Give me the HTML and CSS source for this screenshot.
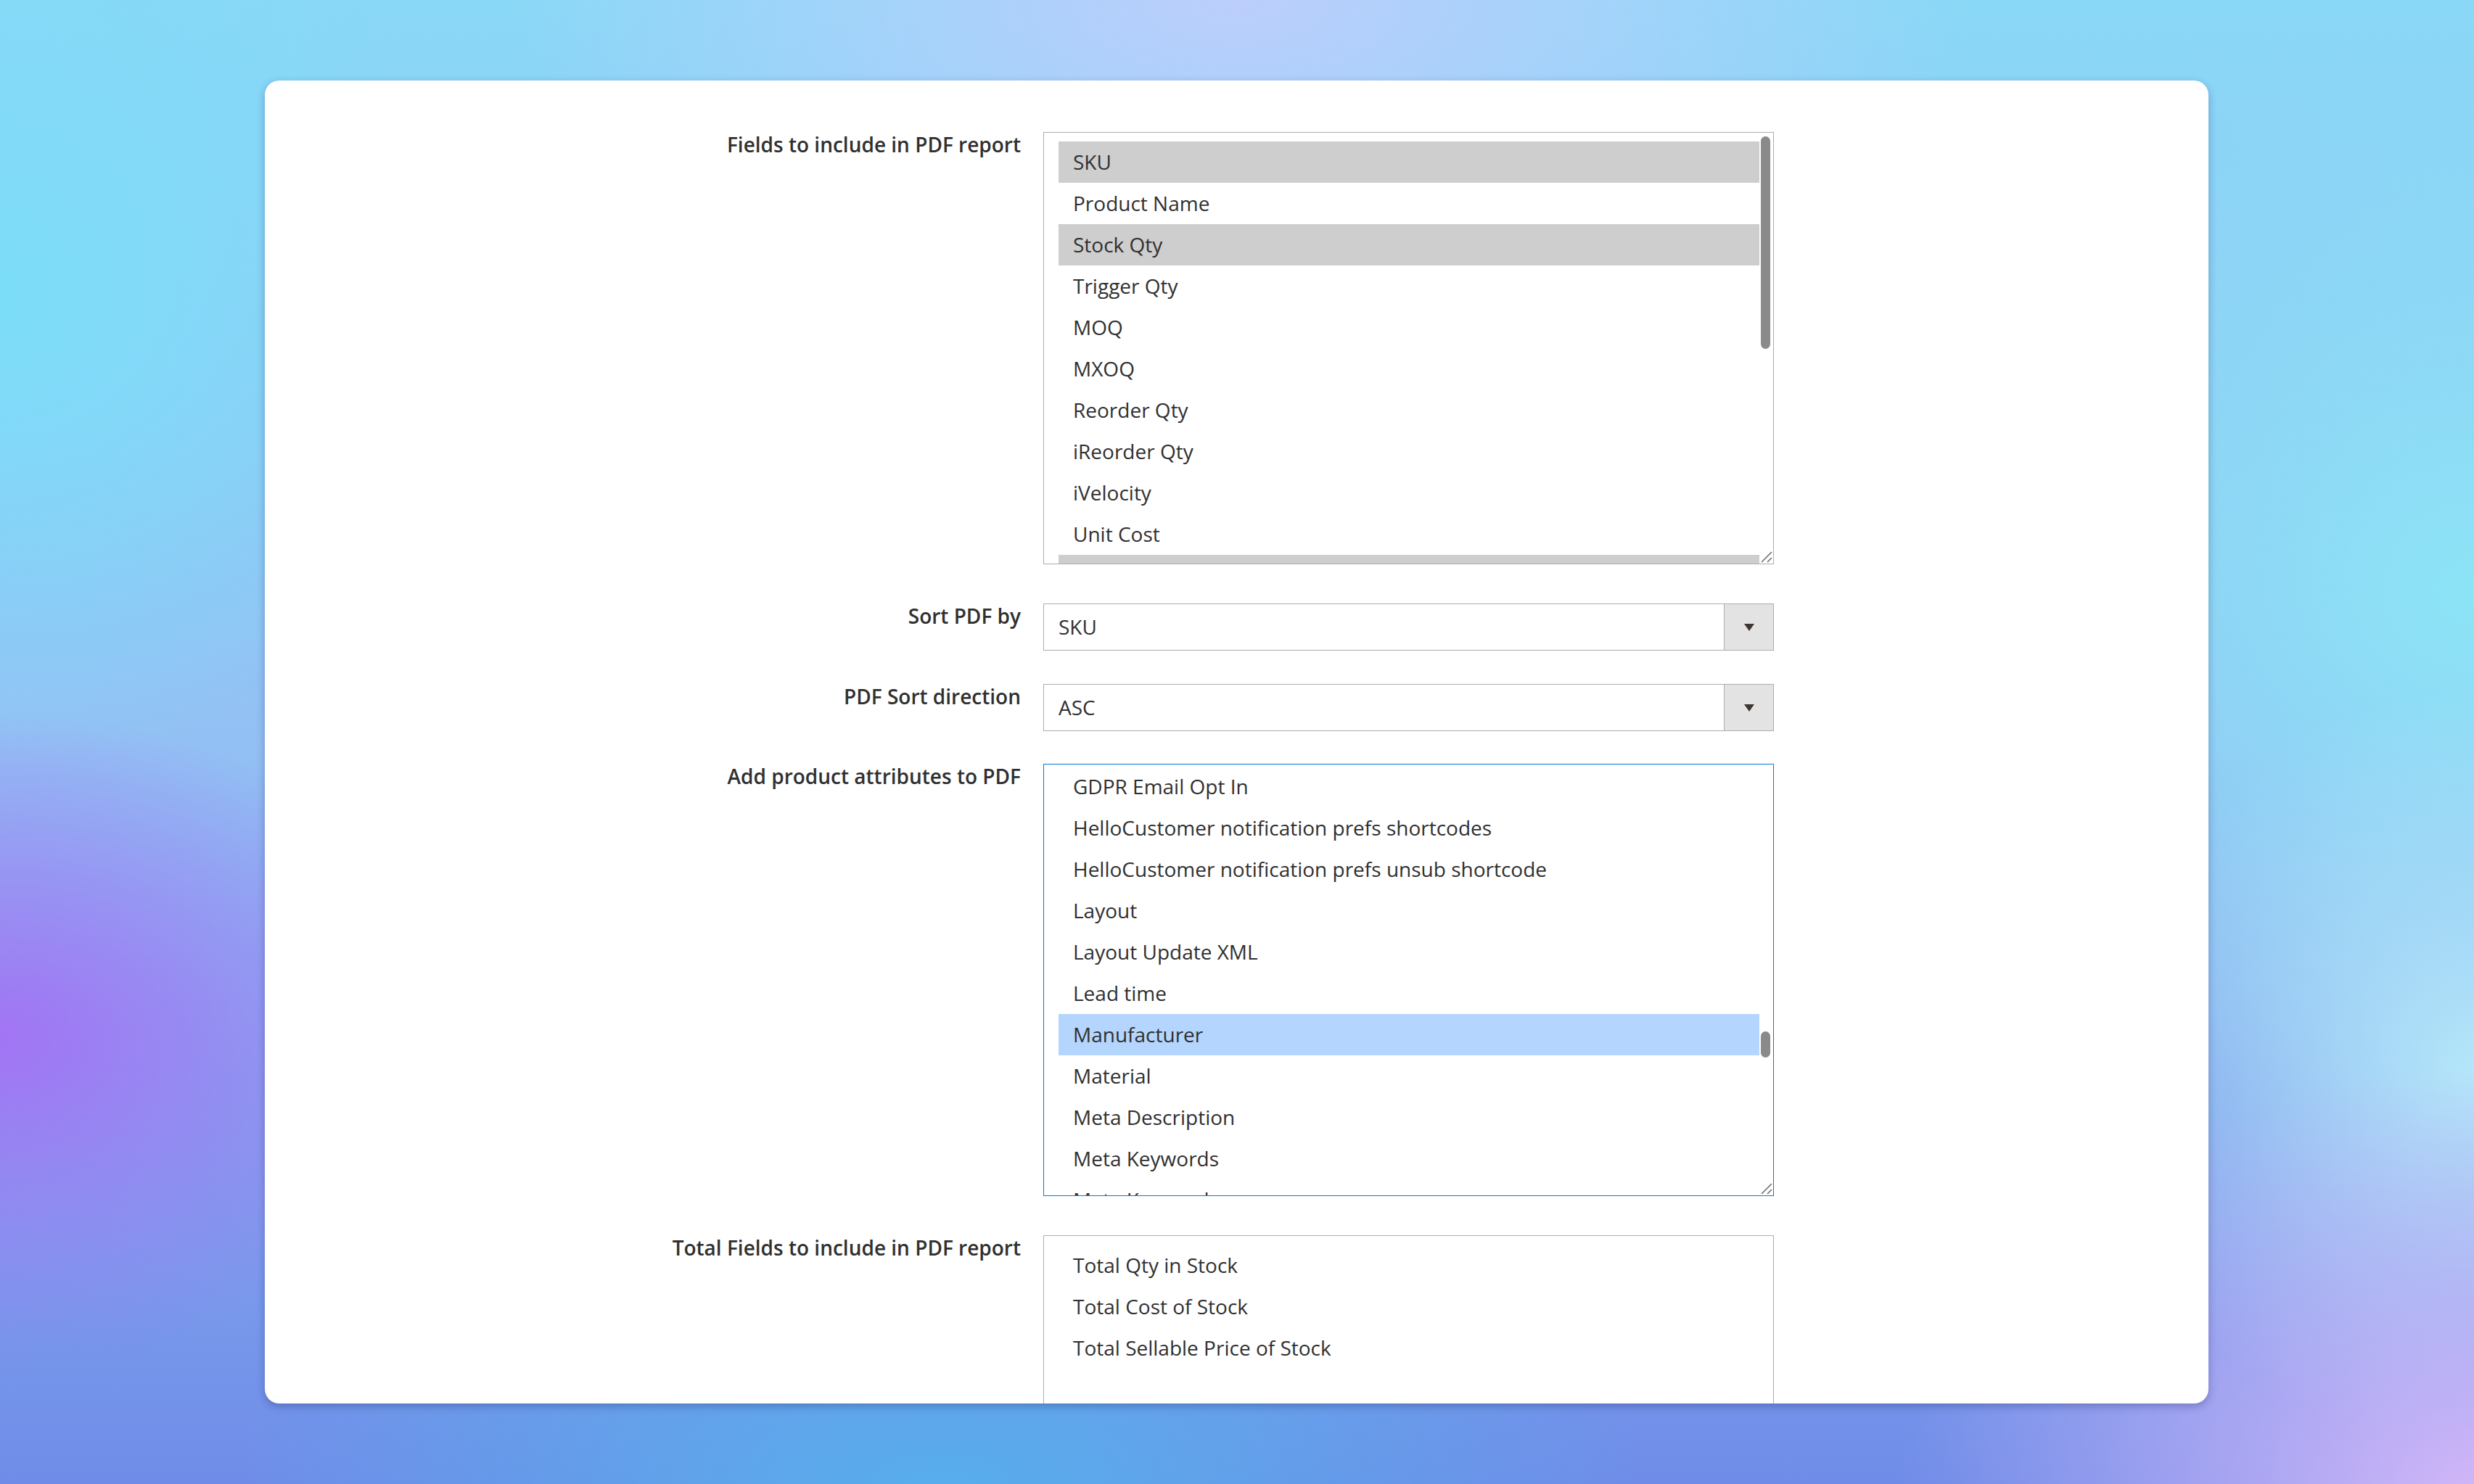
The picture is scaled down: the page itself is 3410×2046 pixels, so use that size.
FILE: index.html
```html
<!DOCTYPE html>
<html lang="en">
<head>
<meta charset="utf-8">
<title>PDF report settings</title>
<link rel="stylesheet" href="styles.css">
</head>
<body>
<div class="stage">
  <div class="card">
    <div class="row row-list">
      <div class="label">Fields to include in PDF report</div>
      <div class="control">
        <div class="listbox">
          <div class="options">
            <div class="opt sel">SKU</div>
            <div class="opt">Product Name</div>
            <div class="opt sel">Stock Qty</div>
            <div class="opt">Trigger Qty</div>
            <div class="opt">MOQ</div>
            <div class="opt">MXOQ</div>
            <div class="opt">Reorder Qty</div>
            <div class="opt">iReorder Qty</div>
            <div class="opt">iVelocity</div>
            <div class="opt">Unit Cost</div>
            <div class="opt sel"></div>
          </div>
          <div class="thumb thumb-long"></div>
          <svg class="grip" width="16" height="16" viewBox="0 0 16 16"><path d="M1 15 L15 1 M9 15 L15 9" stroke="#6f6f6f" stroke-width="1.6" fill="none"/></svg>
        </div>
      </div>
    </div>

    <div class="row row-select">
      <div class="label">Sort PDF by</div>
      <div class="control">
        <div class="select"><span class="select-value">SKU</span><span class="select-btn"><span class="arrow"></span></span></div>
      </div>
    </div>

    <div class="row row-select row-select-last">
      <div class="label">PDF Sort direction</div>
      <div class="control">
        <div class="select"><span class="select-value">ASC</span><span class="select-btn"><span class="arrow"></span></span></div>
      </div>
    </div>

    <div class="row row-list">
      <div class="label">Add product attributes to PDF</div>
      <div class="control">
        <div class="listbox focused">
          <div class="options scrolled">
            <div class="opt">GDPR Email Opt In</div>
            <div class="opt">HelloCustomer notification prefs shortcodes</div>
            <div class="opt">HelloCustomer notification prefs unsub shortcode</div>
            <div class="opt">Layout</div>
            <div class="opt">Layout Update XML</div>
            <div class="opt">Lead time</div>
            <div class="opt active">Manufacturer</div>
            <div class="opt">Material</div>
            <div class="opt">Meta Description</div>
            <div class="opt">Meta Keywords</div>
            <div class="opt">Meta Keywords</div>
          </div>
          <div class="thumb thumb-short"></div>
          <svg class="grip" width="16" height="16" viewBox="0 0 16 16"><path d="M1 15 L15 1 M9 15 L15 9" stroke="#6f6f6f" stroke-width="1.6" fill="none"/></svg>
        </div>
      </div>
    </div>

    <div class="row">
      <div class="label">Total Fields to include in PDF report</div>
      <div class="control">
        <div class="listbox tall">
          <div class="options">
            <div class="opt">Total Qty in Stock</div>
            <div class="opt">Total Cost of Stock</div>
            <div class="opt">Total Sellable Price of Stock</div>
          </div>
        </div>
      </div>
    </div>
  </div>
</div>
</body>
</html>
```

FILE: styles.css
```css
html, body {
  margin: 0;
  padding: 0;
}

body {
  width: 3410px;
  height: 2046px;
  overflow: hidden;
  font-family: "Open Sans", "Noto Sans", "Liberation Sans", sans-serif;
  color: #303030;
  background:
    radial-gradient(ellipse 850px 600px at 0% 70%, rgba(162, 116, 244, 1), rgba(162, 116, 244, 0) 75%),
    radial-gradient(ellipse 1300px 520px at 38% 100%, rgba(86, 176, 236, 0.95), rgba(86, 176, 236, 0) 75%),
    radial-gradient(ellipse 1100px 800px at 100% 100%, rgba(208, 182, 248, 1), rgba(208, 182, 248, 0) 72%),
    radial-gradient(ellipse 700px 700px at 100% 72%, rgba(180, 230, 249, 1), rgba(180, 230, 249, 0) 75%),
    radial-gradient(ellipse 1400px 650px at 50% 0%, rgba(188, 206, 252, 1), rgba(188, 206, 252, 0) 72%),
    radial-gradient(ellipse 1100px 1000px at 100% 40%, rgba(140, 228, 246, 1), rgba(140, 228, 246, 0) 72%),
    radial-gradient(ellipse 900px 900px at 0% 20%, rgba(124, 222, 249, 1), rgba(124, 222, 249, 0) 72%),
    linear-gradient(180deg, #8ad8f7 0%, #93c0f4 50%, #6f8ce8 100%);
}

.stage {
  padding: 111px 366px 0 365px;
}

.card {
  height: 1824px;
  background: #ffffff;
  border-radius: 20px;
  box-shadow: 0 4px 12px rgba(30, 40, 100, 0.32);
  overflow: hidden;
  padding-top: 71px;
  box-sizing: border-box;
}

.row {
  display: flex;
  align-items: flex-start;
  column-gap: 31px;
}

.row-list {
  margin-bottom: 54px;
}

.row-select {
  margin-bottom: 46px;
}

.row-select-last {
  margin-bottom: 45px;
}

.label {
  width: 1042px;
  flex: none;
  text-align: right;
  font-weight: 600;
  font-size: 28px;
  line-height: 34px;
  color: #303030;
}

.control {
  width: 1007px;
  flex: none;
}

.listbox {
  position: relative;
  height: 596px;
  border: 1px solid #adadad;
  box-sizing: border-box;
  background: #fff;
  overflow: hidden;
}

.listbox.focused {
  border-color: #007bdb;
}

.listbox.tall {
  height: 700px;
}

.options {
  padding: 12px 19px 0 20px;
}

.options.scrolled {
  padding-top: 2px;
}

.opt {
  height: 57px;
  line-height: 57px;
  padding-left: 20px;
  font-size: 28px;
  white-space: nowrap;
  color: #303030;
}

.opt.sel {
  background: #cecece;
}

.opt.active {
  background: #b4d5fe;
}

.thumb {
  position: absolute;
  left: 988px;
  width: 13px;
  border-radius: 7px;
  background: #8a8a8a;
}

.thumb-long {
  top: 5px;
  height: 293px;
}

.thumb-short {
  top: 368px;
  height: 36px;
}

.grip {
  position: absolute;
  right: 1px;
  bottom: 1px;
}

.select {
  display: flex;
  height: 65px;
  border: 1px solid #adadad;
  box-sizing: border-box;
  background: #fff;
}

.select-value {
  flex: 1;
  padding-left: 20px;
  font-size: 28px;
  line-height: 63px;
  color: #303030;
}

.select-btn {
  width: 67px;
  flex: none;
  background: #e3e3e3;
  border-left: 1px solid #adadad;
  display: flex;
  align-items: center;
  justify-content: center;
}

.arrow {
  width: 0;
  height: 0;
  border-left: 7px solid transparent;
  border-right: 7px solid transparent;
  border-top: 10px solid #41362f;
}
```
